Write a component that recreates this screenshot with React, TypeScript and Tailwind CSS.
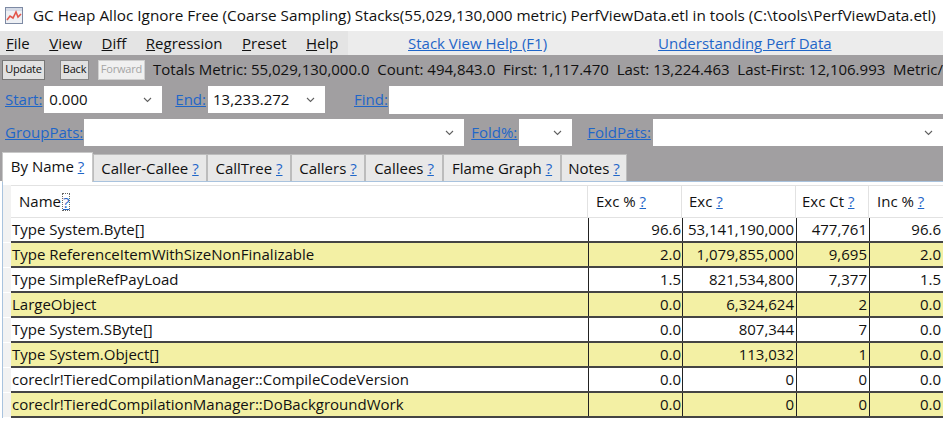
import React from 'react';

const FONT = { fontFamily: '"Open Sans", "Noto Sans", sans-serif' };

const rows = [
  ['Type System.Byte[]', '96.6', '53,141,190,000', '477,761', '96.6'],
  ['Type ReferenceItemWithSizeNonFinalizable', '2.0', '1,079,855,000', '9,695', '2.0'],
  ['Type SimpleRefPayLoad', '1.5', '821,534,800', '7,377', '1.5'],
  ['LargeObject', '0.0', '6,324,624', '2', '0.0'],
  ['Type System.SByte[]', '0.0', '807,344', '7', '0.0'],
  ['Type System.Object[]', '0.0', '113,032', '1', '0.0'],
  ['coreclr!TieredCompilationManager::CompileCodeVersion', '0.0', '0', '0', '0.0'],
  ['coreclr!TieredCompilationManager::DoBackgroundWork', '0.0', '0', '0', '0.0'],
];

const tabs = ['Caller-Callee', 'CallTree', 'Callers', 'Callees', 'Flame Graph', 'Notes'];
const tabW = ['w-[114px]', 'w-[84px]', 'w-[74px]', 'w-[78px]', 'w-[118px]', 'w-[66px]'];

function Chevron() {
  return (
    <svg width="9" height="6" viewBox="0 0 9 6" className="shrink-0">
      <path d="M1 1l3.5 3.5L8 1" fill="none" stroke="#606060" strokeWidth="1.1" />
    </svg>
  );
}

function Combo({ w, value }: { w: string; value?: string }) {
  return (
    <div className={`${w} h-[27px] bg-white flex items-center justify-between pl-[5px] pr-[10px] text-[15px] text-[#111]`}>
      <span>{value}</span>
      <Chevron />
    </div>
  );
}

function Link({ children, cls = '' }: { children: React.ReactNode; cls?: string }) {
  return <span className={`text-[#1f66c8] underline text-[15px] ${cls}`}>{children}</span>;
}

function Q() {
  return <span className="text-[#1f66c8] underline">?</span>;
}

function Menu({ k, rest }: { k: string; rest: string }) {
  return (
    <span className="text-[15px] text-[#111]">
      <span className="underline">{k}</span>
      {rest}
    </span>
  );
}

export default function App() {
  return (
    <div className="w-[943px] h-[424px] overflow-hidden bg-white relative" style={FONT}>
      {/* title bar */}
      <div className="h-[31px] flex items-center pl-[5px] gap-[10px] whitespace-nowrap">
        <svg width="18" height="17" viewBox="0 0 18 17" className="shrink-0">
          <rect x="0.5" y="0.5" width="17" height="16" fill="#eef0f4" stroke="#7d8aa4" />
          <rect x="1" y="1" width="16" height="3" fill="#d4dae6" />
          <path d="M2 13l3-4 3 2 3-6 2 5 3-3" fill="none" stroke="#e2574c" strokeWidth="1.6" />
        </svg>
        <span className="text-[15.3px] text-[#111]">
          GC Heap Alloc Ignore Free (Coarse Sampling) Stacks(55,029,130,000 metric) PerfViewData.etl in tools (C:\tools\PerfViewData.etl)
        </span>
      </div>

      {/* menu bar */}
      <div className="h-[24px] flex items-center bg-[#e4e4e4] whitespace-nowrap">
        <div className="w-[348px] flex items-center gap-[19.5px] pl-[6px]">
          <Menu k="F" rest="ile" />
          <Menu k="V" rest="iew" />
          <Menu k="D" rest="iff" />
          <Menu k="R" rest="egression" />
          <Menu k="P" rest="reset" />
          <Menu k="H" rest="elp" />
        </div>
        <div className="flex-1 h-full flex items-center bg-[#ececec]">
          <Link cls="ml-[60px]">Stack View Help (F1)</Link>
          <Link cls="ml-[111px]">Understanding Perf Data</Link>
        </div>
      </div>

      {/* gray panel */}
      <div className="bg-[#a19fa1]">
        <div className="h-[29px] flex items-center pl-[2px] whitespace-nowrap">
          <div className="shrink-0 w-[43px] h-[20px] flex items-center justify-center bg-[#e1e1e1] border border-[#777] text-[11px] tracking-[-0.2px] text-[#111]">Update</div>
          <div className="shrink-0 ml-[15px] w-[29px] h-[20px] flex items-center justify-center bg-[#e1e1e1] border border-[#888] text-[11px] tracking-[-0.2px] text-[#111]">Back</div>
          <div className="shrink-0 ml-[9px] w-[47px] h-[20px] flex items-center justify-center bg-[#f0f0f0] border border-[#cfcfcf] text-[11px] tracking-[-0.2px] text-[#a5a5a5]">Forward</div>
          <div className="ml-[8px] text-[15px] text-[#111] whitespace-pre">
            Totals Metric: 55,029,130,000.0  Count: 494,843.0  First: 1,117.470  Last: 13,224.463  Last-First: 12,106.993  Metric/Interval: 4.16
          </div>
        </div>

        <div className="h-[32px] flex items-center pl-[5px] pb-[1px]">
          <Link>Start:</Link>
          <div className="ml-[2px]"><Combo w="w-[118px]" value="0.000" /></div>
          <Link cls="ml-[13px]">End:</Link>
          <div className="ml-[2px]"><Combo w="w-[117px]" value="13,233.272" /></div>
          <Link cls="ml-[29px]">Find:</Link>
          <div className="ml-[1px] flex-1 h-[28px] bg-white" />
        </div>

        <div className="h-[33px] flex items-center pl-[5px]">
          <Link>GroupPats:</Link>
          <div className="ml-[1px]"><Combo w="w-[380px]" /></div>
          <Link cls="ml-[7px]">Fold%:</Link>
          <div className="ml-[2px]"><Combo w="w-[53px]" /></div>
          <Link cls="ml-[15px]">FoldPats:</Link>
          <div className="ml-[2px] flex-1"><Combo w="w-full" /></div>
        </div>

        {/* tabs */}
        <div className="h-[32px] flex items-end pl-[2px] whitespace-nowrap">
          <div className="w-[91px] h-[30px] bg-white border border-b-0 border-[#c8c8c8] flex items-center justify-center text-[15px] text-[#111] -mb-[1px] relative z-10 pb-[2px]">
            By Name&nbsp;<Q />
          </div>
          {tabs.map((t, i) => (
            <div
              key={t}
              className={`${tabW[i]} h-[27px] bg-[#e8e8e8] border border-[#bcbcbc] border-b-0 flex items-center justify-center text-[15px] text-[#111]`}
            >
              {t}&nbsp;<Q />
            </div>
          ))}
        </div>
      </div>

      {/* grid */}
      <div className="ml-[2px] border-l border-t border-[#a9c3de] text-[15px] text-[#111] whitespace-nowrap">
        <div className="flex h-[36px] pt-[3px]">
          <div className="w-[8px] bg-[#f2f2f2]" />
          <div className="flex flex-1 border-t border-b border-[#e2e2e2]">
            <div className="w-[577px] flex items-center pl-[8px] border-r border-[#e2e2e2]">
              Name<span className="ml-[2px] outline-1 outline-dotted outline-[#666] text-[#1f66c8] underline leading-[16px]">?</span>
            </div>
            <div className="w-[94px] flex items-center pl-[8px] border-r border-[#e2e2e2]">Exc %&nbsp;<Q /></div>
            <div className="w-[114px] flex items-center pl-[7px] border-r border-[#e2e2e2]">Exc&nbsp;<Q /></div>
            <div className="w-[73px] flex items-center pl-[6px] border-r border-[#e2e2e2]">Exc Ct&nbsp;<Q /></div>
            <div className="flex-1 flex items-center pl-[8px]">Inc %&nbsp;<Q /></div>
          </div>
        </div>
        {rows.map((r, i) => {
          const bg = i % 2 === 1 ? 'bg-[#f3f0a4]' : 'bg-white';
          return (
            <div key={i} className="flex h-[25px]">
              <div className="w-[8px] bg-[#f2f2f2] border-b border-white" />
              <div className={`flex flex-1 ${bg} border-b-2 border-[#444]`}>
                <div className="w-[577px] flex items-center pl-[1px]">{r[0]}</div>
                <div className="w-[94px] flex items-center justify-end pr-[1px] border-l border-[#222]">{r[1]}</div>
                <div className="w-[114px] flex items-center justify-end pr-[2px] border-l border-[#222]">{r[2]}</div>
                <div className="w-[73px] flex items-center justify-end pr-[2px] border-l border-[#222]">{r[3]}</div>
                <div className="flex-1 flex items-center justify-end pr-[2px] border-l border-[#222]">{r[4]}</div>
              </div>
            </div>
          );
        })}
      </div>
    </div>
  );
}
